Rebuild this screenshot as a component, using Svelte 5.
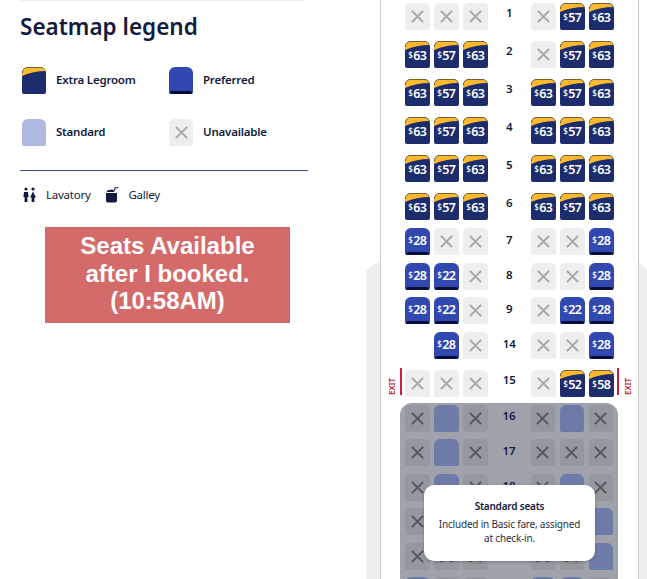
<script>
  // x = unavailable, e = extra legroom, p = preferred, s = standard, _ = no seat
  const rows = [
    { n: 1, left: ["x", "x", "x"], right: ["x", "e57", "e63"], wide: true, high: true },
    { n: 2, left: ["e63", "e57", "e63"], right: ["x", "e57", "e63"], wide: true, high: true },
    { n: 3, left: ["e63", "e57", "e63"], right: ["e63", "e57", "e63"], wide: true, high: true },
    { n: 4, left: ["e63", "e57", "e63"], right: ["e63", "e57", "e63"], wide: true, high: true },
    { n: 5, left: ["e63", "e57", "e63"], right: ["e63", "e57", "e63"], wide: true, high: true },
    { n: 6, left: ["e63", "e57", "e63"], right: ["e63", "e57", "e63"], high: true },
    { n: 7, left: ["p28", "x", "x"], right: ["x", "x", "p28"] },
    { n: 8, left: ["p28", "p22", "x"], right: ["x", "x", "p28"] },
    { n: 9, left: ["p28", "p22", "x"], right: ["x", "p22", "p28"] },
    { n: 14, left: ["_", "p28", "x"], right: ["x", "x", "p28"], wide: true },
    { n: 15, left: ["x", "x", "x"], right: ["x", "e52", "e58"], exit: true, high: true },
  ];

  const standardRows = [
    { n: 16, left: ["x", "s", "x"], right: ["x", "s", "x"], high: true },
    { n: 17, left: ["x", "s", "x"], right: ["x", "x", "x"] },
    { n: 18, left: ["x", "s", "x"], right: ["x", "s", "x"] },
    { n: 19, left: ["x", "x", "x"], right: ["x", "x", "s"] },
    { n: 20, left: ["x", "x", "x"], right: ["x", "x", "s"] },
    { n: 21, left: ["s", "x", "x"], right: ["s", "s", "x"] },
  ];
</script>

{#snippet cross()}
  <svg class="cross" viewBox="0 0 16 16"><path d="M2 2 L14 14 M14 2 L2 14" /></svg>
{/snippet}

{#snippet extraCap()}
  <svg class="cap" viewBox="0 0 25 27" preserveAspectRatio="none">
    <path d="M0 9 V6 Q0 0 6 0 H19 Q25 0 25 4 Q12 4 0 9 Z" fill="#fdb92e" />
    <path d="M0.4 6 Q0.4 0.4 6 0.4 H19 Q24.6 0.4 24.6 4" fill="none" stroke="#3a3a3a" stroke-width="0.8" />
  </svg>
{/snippet}

{#snippet seat(code)}
  {#if code === "_"}
    <span class="seat"></span>
  {:else if code === "x"}
    <span class="seat off">{@render cross()}</span>
  {:else if code === "s"}
    <span class="seat standard"></span>
  {:else if code[0] === "e"}
    <span class="seat extra">
      {@render extraCap()}
      <span class="price"><small>$</small>{code.slice(1)}</span>
    </span>
  {:else}
    <span class="seat preferred">
      <span class="price"><small>$</small>{code.slice(1)}</span>
    </span>
  {/if}
{/snippet}

{#snippet row(r)}
  <div class="row" class:wide={r.wide}>
    {#if r.exit}
      <span class="exit exit-left">EXIT</span>
    {/if}
    <div class="group">
      {#each r.left as code}{@render seat(code)}{/each}
    </div>
    <span class="num" class:high={r.high}>{r.n}</span>
    <div class="group">
      {#each r.right as code}{@render seat(code)}{/each}
    </div>
    {#if r.exit}
      <span class="exit exit-right">EXIT</span>
    {/if}
  </div>
{/snippet}

<div class="page">
  <aside class="legend">
    <div class="topline"></div>
    <h2>Seatmap legend</h2>
    <div class="keys">
      <div class="key">
        <span class="seat extra big">{@render extraCap()}</span>
        <b>Extra Legroom</b>
      </div>
      <div class="key">
        <span class="seat preferred big"></span>
        <b>Preferred</b>
      </div>
      <div class="key">
        <span class="seat plain big"></span>
        <b>Standard</b>
      </div>
      <div class="key">
        <span class="seat off big">{@render cross()}</span>
        <b>Unavailable</b>
      </div>
    </div>
    <div class="facilities">
      <span class="facility">
        <svg width="13" height="16" viewBox="0 0 13 16" fill="#111b40">
          <circle cx="3" cy="2" r="1.6" />
          <circle cx="10" cy="2" r="1.6" />
          <path d="M1 5 H5 L5.6 10 H4.4 V15 H1.6 V10 H0.4 Z" />
          <path d="M10 4.5 L13 10.5 H11.4 V15 H8.6 V10.5 H7 Z" />
        </svg>
        Lavatory
      </span>
      <span class="facility">
        <svg width="14" height="16" viewBox="0 0 14 16" fill="#111b40">
          <path d="M1 6 H12 V13.5 Q12 15.5 10 15.5 H3 Q1 15.5 1 13.5 Z" />
          <path d="M1.5 5 Q2 2.5 5 3 Q7 1.8 9 4 L9.3 5 Z" />
          <path d="M9 4 L10.2 0.8 H13.5" fill="none" stroke="#111b40" stroke-width="1.1" />
        </svg>
        Galley
      </span>
    </div>
    <div class="note">Seats Available<br />after I booked.<br />(10:58AM)</div>
  </aside>

  <section class="cabin">
    <div class="wing wing-left"></div>
    <div class="wing wing-right"></div>
    <div class="fuselage">
      {#each rows as r}
        {@render row(r)}
      {/each}
      <div class="dimmed">
        {#each standardRows as r}
          {@render row(r)}
        {/each}
        <div class="popup">
          <strong>Standard seats</strong>
          <p>Included in Basic fare, assigned at check-in.</p>
        </div>
      </div>
    </div>
  </section>
</div>

<style>
  :global(body) {
    margin: 0;
    background: #fff;
    overflow: hidden;
    font-family: "Noto Sans", "Open Sans", sans-serif;
    color: #111b40;
  }

  .page {
    display: flex;
    width: 647px;
    height: 579px;
    overflow: hidden;
  }

  .legend {
    width: 366px;
    flex: none;
    padding: 0 0 0 20px;
    box-sizing: border-box;
  }

  .topline {
    width: 285px;
    height: 1px;
    background: #eee;
  }

  h2 {
    margin: 11px 0 0;
    font-size: 22.5px;
    line-height: 30px;
    font-weight: 600;
    color: #111b40;
  }

  .keys {
    display: grid;
    grid-template-columns: 147px 139px;
    row-gap: 25px;
    margin: 25px 0 0 2px;
  }

  .key {
    display: flex;
    align-items: center;
    gap: 10px;
    font-size: 11.5px;
    line-height: 15px;
    letter-spacing: -0.2px;
  }

  .key b {
    font-weight: 600;
    margin-bottom: 2px;
  }

  .facilities {
    display: flex;
    gap: 14px;
    width: 288px;
    margin-top: 24px;
    padding: 15px 0 0 3px;
    border-top: 1px solid #3d4d8c;
    box-sizing: border-box;
    font-size: 11.5px;
    letter-spacing: -0.25px;
    line-height: 18px;
  }

  .facility {
    display: flex;
    align-items: center;
    gap: 10px;
  }

  .note {
    width: 245px;
    margin: 23px 0 0 25px;
    padding: 5px 0 8px;
    background: #d46a6a;
    color: #fff;
    font-family: "Liberation Sans", Arial, sans-serif;
    font-weight: 700;
    font-size: 24px;
    line-height: 27.5px;
    text-align: center;
  }

  .cabin {
    position: relative;
    flex: 1;
    min-width: 0;
  }

  .wing {
    position: absolute;
    top: 260px;
    bottom: 0;
    background: #efefef;
  }

  .wing-left {
    left: 0;
    width: 15px;
    clip-path: polygon(0 10px, 100% 0, 100% 100%, 0 100%);
  }

  .wing-right {
    right: 0;
    width: 9px;
    clip-path: polygon(0 0, 100% 10px, 100% 100%, 0 100%);
  }

  .fuselage {
    position: relative;
    margin-left: 14px;
    width: 259px;
    height: 579px;
    box-sizing: border-box;
    padding: 3px 0 0 24px;
    background: #fff;
    border-left: 1px solid #ccc;
    border-right: 1px solid #ccc;
  }

  .row {
    position: relative;
    display: flex;
    align-items: flex-start;
    height: 27px;
    margin-bottom: 7.8px;
  }

  .row.wide {
    margin-bottom: 11px;
  }

  .group {
    display: flex;
    gap: 4.5px;
  }

  .num {
    width: 43.5px;
    text-align: center;
    font-size: 11.5px;
    font-weight: 600;
    line-height: 23px;
    color: #111b40;
  }

  .num.high {
    line-height: 20px;
  }

  .dimmed .num.high {
    line-height: 22px;
  }

  .seat {
    position: relative;
    display: block;
    width: 24.5px;
    height: 27px;
    flex: none;
    border-radius: 6px 6px 2px 2px;
    overflow: hidden;
  }

  .seat.big {
    width: 24px;
    height: 27px;
  }

  .off {
    display: flex;
    align-items: center;
    justify-content: center;
    background: #eeeeee;
    border-radius: 5px 5px 2px 2px;
  }

  .cross {
    width: 15px;
    height: 15px;
  }

  .cross path {
    fill: none;
    stroke: #a8a8a8;
    stroke-width: 2.2;
  }

  .extra {
    background: #1c2c6c;
  }

  .cap {
    position: absolute;
    inset: 0;
    width: 100%;
    height: 100%;
  }

  .preferred {
    background: #3148b0;
  }

  .preferred::after {
    content: "";
    position: absolute;
    left: 1px;
    right: 1px;
    bottom: 0;
    height: 3px;
    background: #080c38;
    border-radius: 2px 2px 0 0;
  }

  .plain {
    background: #aeb9e0;
  }

  .price {
    position: absolute;
    left: 0;
    right: 0;
    top: 4px;
    text-align: center;
    color: #fff;
    font-size: 12.5px;
    font-weight: 600;
    line-height: 16px;
    letter-spacing: -0.7px;
  }

  .extra .price {
    top: 6px;
  }

  .price small {
    font-size: 8px;
    font-weight: 500;
    vertical-align: 2px;
    margin-right: 1px;
  }

  .exit {
    position: absolute;
    top: -2px;
    height: 27px;
    display: flex;
    align-items: center;
    color: #c8203f;
    font-size: 8px;
    font-weight: 600;
    writing-mode: vertical-rl;
    transform: rotate(180deg);
  }

  .exit-left {
    right: calc(100% + 3px);
    padding-left: 3px;
    border-left: 2px solid #c8203f;
  }

  .exit-right {
    left: 212px;
    padding-right: 3px;
    border-right: 2px solid #c8203f;
  }

  .dimmed {
    position: relative;
    margin: -2px -5px 0;
    padding: 2px 5px 0;
    height: 300px;
    width: 208px;
    background: #a0a2ab;
    border-radius: 12px 12px 0 0;
  }

  .dimmed .off {
    background: #96989f;
  }

  .dimmed .cross path {
    stroke: #55575f;
  }

  .dimmed .standard {
    background: #6e7aa8;
  }

  .dimmed .row {
    margin-bottom: 7.5px;
  }

  .popup {
    position: absolute;
    left: 24px;
    top: 82px;
    width: 171px;
    height: 76px;
    box-sizing: border-box;
    padding: 14px 12px 0;
    background: #fff;
    border-radius: 10px;
    text-align: center;
    font-size: 10px;
    line-height: 14px;
    box-shadow: 0 1px 3px rgba(40, 42, 55, 0.35);
  }

  .popup strong {
    display: block;
    font-weight: 600;
    letter-spacing: -0.2px;
    margin-bottom: 4px;
  }

  .popup p {
    margin: 0;
    color: #2a2f45;
    letter-spacing: -0.2px;
  }
</style>
